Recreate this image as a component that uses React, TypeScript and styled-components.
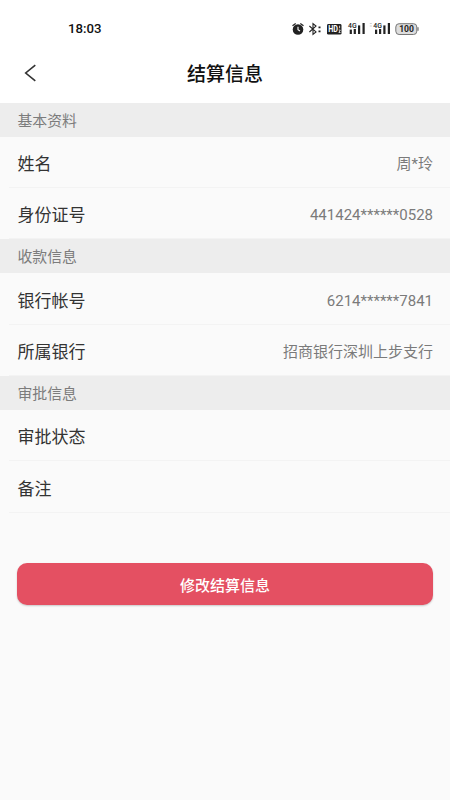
import React from 'react';
import styled, { createGlobalStyle } from 'styled-components';

const GlobalStyle = createGlobalStyle`
  * { box-sizing: border-box; }
  body {
    margin: 0;
    background: #fafafa;
    font-family: Roboto, "Noto Sans CJK SC", sans-serif;
  }
`;

const Screen = styled.main`
  display: flex;
  flex-direction: column;
  width: 450px;
  height: 800px;
  background: #fafafa;
  overflow: hidden;
`;

const TopArea = styled.header`
  flex: none;
  height: 102.6px;
  background: #fff;
`;

const StatusBar = styled.div`
  display: flex;
  justify-content: space-between;
  height: 45px;
  padding: 0 30px 0 68px;
`;

const Clock = styled.span`
  padding-top: 20px;
  font-size: 13.2px;
  line-height: 18px;
  font-weight: 500;
  color: #111;
`;

const StatusIcons = styled.svg`
  display: block;
  width: 130px;
  height: 24px;
  margin-top: 16px;
`;

const NavBar = styled.div`
  display: grid;
  grid-template-columns: 60px 1fr 60px;
  align-items: center;
  height: 57px;
`;

const BackButton = styled.button`
  display: flex;
  padding: 0 0 2px 24px;
  border: 0;
  background: none;
`;

const Title = styled.h1`
  margin: 0;
  padding-top: 2px;
  font-size: 19px;
  line-height: 28px;
  font-weight: 500;
  text-align: center;
  color: #111;
`;

const SectionHeader = styled.h2`
  flex: none;
  height: 34.2px;
  margin: 0;
  padding: 1px 0 0 17.4px;
  background: #ededed;
  color: #7c7c7c;
  font-size: 14.9px;
  line-height: 34px;
  font-weight: 400;
`;

const Row = styled.div`
  flex: none;
  display: flex;
  align-items: center;
  justify-content: space-between;
  height: 51.25px;
  margin-left: 9px;
  padding: 4px 17px 0 8.4px;
  border-bottom: 1px solid #f3f3f3;
`;

const Label = styled.span`
  font-size: 17px;
  line-height: 26px;
  color: #333;
`;

const Value = styled.span`
  font-size: 15px;
  line-height: 24px;
  color: #7a7a7a;
`;

const SubmitButton = styled.button`
  flex: none;
  height: 42.4px;
  margin: 50px 17px 0;
  padding: 4.4px 0 0;
  border: 0;
  border-radius: 10px;
  background: #e45062;
  box-shadow: 0 1px 2px rgba(0, 0, 0, 0.2);
  color: #fff;
  font-family: inherit;
  font-size: 15px;
  line-height: 24px;
  font-weight: 500;
`;

interface Section {
  title: string;
  rows: { label: string; value?: string }[];
}

const sections: Section[] = [
  {
    title: '基本资料',
    rows: [
      { label: '姓名', value: '周*玲' },
      { label: '身份证号', value: '441424******0528' },
    ],
  },
  {
    title: '收款信息',
    rows: [
      { label: '银行帐号', value: '6214******7841' },
      { label: '所属银行', value: '招商银行深圳上步支行' },
    ],
  },
  {
    title: '审批信息',
    rows: [{ label: '审批状态' }, { label: '备注' }],
  },
];

const Signal = ({ x }: { x: number }) => (
  <g transform={`translate(${x} 0)`} fill="#222">
    <text x="0" y="12" fontSize="8" fontWeight="500" textLength="8.6" lengthAdjust="spacingAndGlyphs">4G</text>
    <rect x="1.7" y="13.6" width="2.2" height="4.4" />
    <rect x="5.7" y="13" width="2.2" height="5" />
    <rect x="10" y="9.4" width="2.2" height="8.6" />
    <rect x="14.5" y="7" width="2.2" height="11" />
  </g>
);

const StatusIconStrip = () => (
  <StatusIcons viewBox="0 0 130 24" aria-hidden="true">
    {/* alarm */}
    <circle cx="8" cy="13.5" r="5.3" fill="#222" />
    <path d="M2.5 9.8 5.7 7.4M10.3 7.4l3.2 2.4" stroke="#222" strokeWidth="1.2" fill="none" />
    <path d="M8 10.8v3l2 1.2" stroke="#fff" strokeWidth="1.1" fill="none" />
    {/* bluetooth */}
    <path d="M19.4 10 26 15.9l-3 2.5V7.6l3 2.5-6.6 5.9" stroke="#222" strokeWidth="1.1" fill="none" />
    <path d="M28.5 11.3h2M28.5 15.3h2" stroke="#222" strokeWidth="1.8" />
    {/* HD */}
    <rect x="37" y="8" width="14.5" height="10.6" rx="1.4" fill="#222" />
    <text x="38.2" y="16.2" fontSize="8.4" fontWeight="700" fill="#fff" textLength="9.8" lengthAdjust="spacingAndGlyphs">HD</text>
    <path d="M49.6 9.7v2.6M48.7 14h1.6l-1.4 2.5h1.6" stroke="#fff" strokeWidth=".8" fill="none" />
    {/* mobile signals */}
    <Signal x={58} />
    <path d="M79.8 7.5h2M79.8 10h2" stroke="#ccc" strokeWidth=".9" />
    <Signal x={83.3} />
    {/* battery */}
    <rect x="105.8" y="7.7" width="21" height="10.8" rx="3.3" fill="#ddd" stroke="#777" strokeWidth="1" />
    <path d="M128 11.2v3.6" stroke="#777" strokeWidth="1.3" />
    <text x="109.2" y="16.2" fontSize="8.8" fontWeight="700" fill="#222" textLength="14.8" lengthAdjust="spacingAndGlyphs">100</text>
  </StatusIcons>
);

export default function App() {
  return (
    <Screen>
      <GlobalStyle />
      <TopArea>
        <StatusBar>
          <Clock>18:03</Clock>
          <StatusIconStrip />
        </StatusBar>
        <NavBar>
          <BackButton aria-label="返回">
            <svg width="13" height="18" viewBox="0 0 13 18" fill="none">
              <path d="M11.3 1.2 1.7 9l9.6 7.8" stroke="#333" strokeWidth="1.6" />
            </svg>
          </BackButton>
          <Title>结算信息</Title>
        </NavBar>
      </TopArea>
      {sections.map((section) => (
        <React.Fragment key={section.title}>
          <SectionHeader>{section.title}</SectionHeader>
          {section.rows.map((row) => (
            <Row key={row.label}>
              <Label>{row.label}</Label>
              {row.value && <Value>{row.value}</Value>}
            </Row>
          ))}
        </React.Fragment>
      ))}
      <SubmitButton>修改结算信息</SubmitButton>
    </Screen>
  );
}
